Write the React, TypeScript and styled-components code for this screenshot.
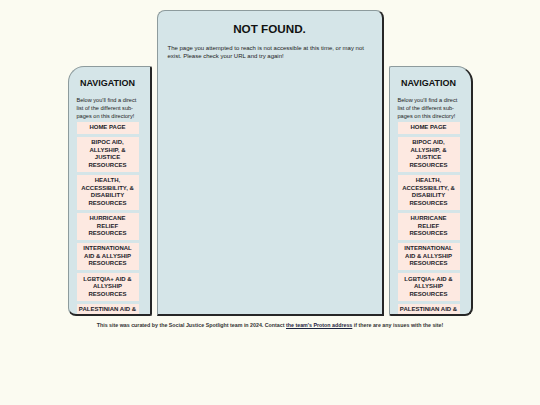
import styled, { createGlobalStyle } from "styled-components";

const GlobalStyle = createGlobalStyle`
  html, body {
    margin: 0;
    padding: 0;
    background-color: #fbfbf1;
    font-family: "Liberation Sans", Arial, sans-serif;
    color: #111;
  }
  * {
    box-sizing: border-box;
  }
`;

const NAV_LINKS = [
  "Home Page",
  "BIPOC Aid, Allyship, & Justice Resources",
  "Health, Accessibility, & Disability Resources",
  "Hurricane Relief Resources",
  "International Aid & Allyship Resources",
  "LGBTQIA+ Aid & Allyship Resources",
  "Palestinian Aid & Allyship Resources",
  "Women's Aid & Allyship Resources",
];

const Layout = styled.div`
  width: 405px;
  margin: 10px auto 0;
  display: flex;
  align-items: flex-end;
  gap: 5px;
`;

const panelBorder = `
  background-color: #d5e5e8;
  border: 1px solid #8d9b9d;
  border-right: 2px solid #262626;
  border-bottom: 2px solid #262626;
`;

const SidePanel = styled.nav<{ $side: "left" | "right" }>`
  ${panelBorder}
  width: 84px;
  height: 250px;
  overflow: hidden;
  padding: 11px 11px 0 8px;
  border-radius: ${({ $side }) =>
    $side === "left" ? "16px 2px 2px 8px" : "2px 16px 8px 2px"};
`;

const NavTitle = styled.h2`
  margin: 0 0 7.5px;
  font-size: 9px;
  line-height: 10px;
  font-weight: bold;
  text-align: center;
  color: #111;
`;

const NavIntro = styled.p`
  margin: 0 0 2px;
  font-size: 5.6px;
  line-height: 8px;
  color: #222;
`;

const NavList = styled.ul`
  list-style: none;
  margin: 0;
  padding: 0;
  display: flex;
  flex-direction: column;
  gap: 3px;
`;

const NavItem = styled.li`
  background-color: #fde9e1;
  padding: 2.3px 2.2px;
  font-size: 6px;
  line-height: 7.6px;
  font-weight: bold;
  text-transform: uppercase;
  text-align: center;
  color: #1c1c28;
`;

const MainPanel = styled.main`
  ${panelBorder}
  width: 227px;
  height: 306px;
  padding: 11px 10px 0;
  border-radius: 8px 8px 0 0;
`;

const Heading = styled.h1`
  margin: 0 0 8.5px;
  font-size: 11.7px;
  line-height: 13px;
  font-weight: bold;
  text-align: center;
  color: #111;
`;

const Message = styled.p`
  margin: 0;
  font-size: 6px;
  line-height: 8px;
  color: #222;
`;

const Footer = styled.footer`
  margin-top: 5px;
  text-align: center;
  font-size: 5.3px;
  line-height: 8px;
  font-weight: bold;
  color: #333;

  a {
    color: #1c2440;
    text-decoration: underline;
  }
`;

const Navigation = ({ side }: { side: "left" | "right" }) => (
  <SidePanel $side={side}>
    <NavTitle>NAVIGATION</NavTitle>
    <NavIntro>
      Below you'll find a direct list of the different sub-pages on this
      directory!
    </NavIntro>
    <NavList>
      {NAV_LINKS.map((link) => (
        <NavItem key={link}>{link}</NavItem>
      ))}
    </NavList>
  </SidePanel>
);

export default function App() {
  return (
    <>
      <GlobalStyle />
      <Layout>
        <Navigation side="left" />
        <MainPanel>
          <Heading>NOT FOUND.</Heading>
          <Message>
            The page you attempted to reach is not accessible at this time, or
            may not exist. Please check your URL and try again!
          </Message>
        </MainPanel>
        <Navigation side="right" />
      </Layout>
      <Footer>
        This site was curated by the Social Justice Spotlight team in 2024.
        Contact <a href="#">the team's Proton address</a> if there are any
        issues with the site!
      </Footer>
    </>
  );
}
